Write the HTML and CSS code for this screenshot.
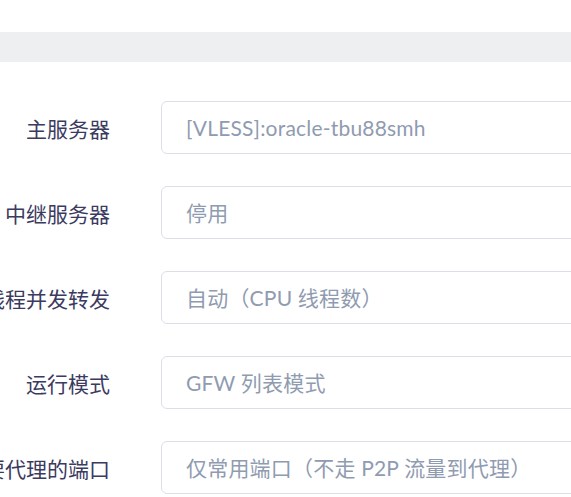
FILE: index.html
```html
<!DOCTYPE html>
<html lang="zh-CN">
<head>
<meta charset="utf-8">
<link rel="stylesheet" href="styles.css">
</head>
<body>
<div class="topspace"></div>
<div class="band"></div>
<form class="form">
  <div class="row">
    <div class="label"><span>主服务器</span></div>
    <div class="field"><input type="text" placeholder="[VLESS]:oracle-tbu88smh"></div>
  </div>
  <div class="row">
    <div class="label"><span>UDP 中继服务器</span></div>
    <div class="field"><input type="text" placeholder="停用"></div>
  </div>
  <div class="row">
    <div class="label"><span>多线程并发转发</span></div>
    <div class="field"><input type="text" placeholder="自动（CPU 线程数）"></div>
  </div>
  <div class="row">
    <div class="label"><span>运行模式</span></div>
    <div class="field"><input type="text" placeholder="GFW 列表模式"></div>
  </div>
  <div class="row">
    <div class="label"><span>需要代理的端口</span></div>
    <div class="field"><input type="text" placeholder="仅常用端口（不走 P2P 流量到代理）"></div>
  </div>
</form>
</body>
</html>
```
FILE: styles.css
```css
html, body {
  margin: 0;
  padding: 0;
  background: #ffffff;
  overflow: hidden;
}
body {
  font-family: Lato, "Noto Sans CJK SC", sans-serif;
  font-size: 21px;
}
.topspace {
  height: 32px;
}
.band {
  height: 30px;
  background: #eeeff1;
}
.form {
  display: flex;
  flex-direction: column;
  gap: 32px;
  padding-top: 39px;
}
.row {
  display: flex;
  align-items: center;
  gap: 51px;
  height: 53px;
}
.label {
  width: 110px;
  flex: none;
  display: flex;
  justify-content: flex-end;
  white-space: nowrap;
  color: #3b3a5f;
}
.field {
  flex: none;
}
.field input {
  box-sizing: border-box;
  width: 500px;
  height: 53px;
  border: 1px solid #dcdfe6;
  border-radius: 6px;
  padding: 0 24px;
  font-family: Lato, "Noto Sans CJK SC", sans-serif;
  font-size: 21px;
  letter-spacing: 0.2px;
  color: #333;
  outline: none;
  background: #fff;
}
.field input::placeholder {
  color: #8f9bb0;
  opacity: 1;
}
```
